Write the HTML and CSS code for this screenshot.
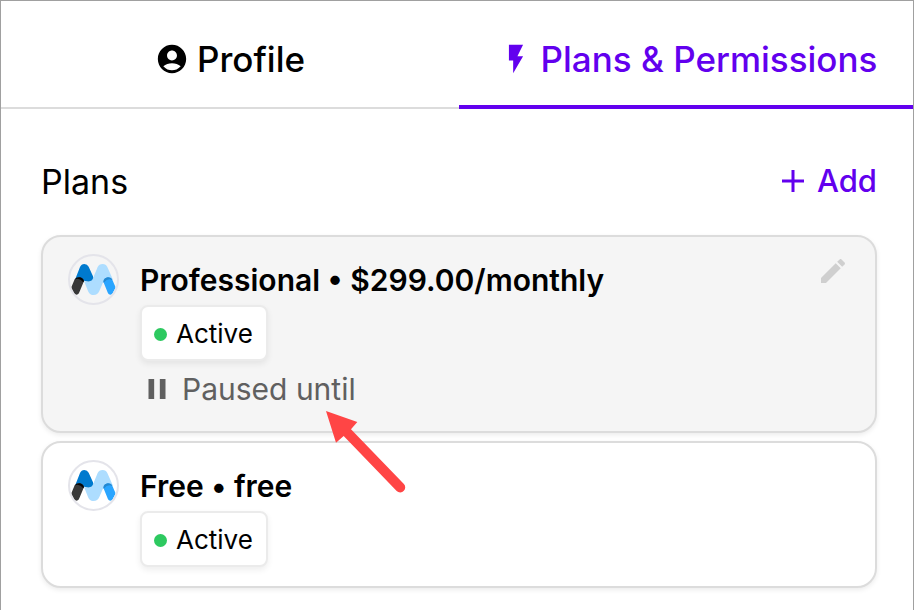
FILE: index.html
```html
<!DOCTYPE html>
<html lang="en">
<head>
<meta charset="utf-8">
<meta name="viewport" content="width=device-width, initial-scale=1">
<title>Plans &amp; Permissions</title>
<link rel="stylesheet" href="styles.css">
</head>
<body>
<svg class="defs" aria-hidden="true">
  <symbol id="logo" viewBox="30 33 141 141">
    <path fill="#ADDDFF" d="M99 100 L113 66 Q117 57 128 57 Q138 57 142 66 L158 102 Q140 96 132 106 L118 138 Q113 150 101 150 Q90 150 85 140 L72 108 Q92 114 99 100Z"/>
    <path fill="#007ACE" d="M45 104 L60 66 Q64 57 73 57 Q82 57 86 65 L99 94 Q102 101 96 106 Q89 112 72 107Z"/>
    <path fill="#383838" d="M34 127 L44 103 Q48 97 58 97 Q68 97 72 108 L58 142 Q56 149 50 149 Q44 149 42 145 L35 131 Q34 129 34 127Z"/>
    <path fill="#050505" d="M44 104 Q48 97 58 97 Q68 97 72 108 L70 112 Q58 96 44 104Z"/>
    <path fill="#2AA5FF" d="M130 110 Q132 98 144 97 Q152 97 156 102 L166 125 Q167 128 165 131 L158 145 Q156 149 151 149 Q146 149 144 145Z"/>
    <path fill="#2588D0" d="M130 110 Q132 98 144 97 Q152 97 156 102 L157 105 Q144 98 131 113Z"/>
  </symbol>
</svg>
<div class="panel">
  <nav class="tabs">
    <a class="tab" href="#profile">
      <svg class="icon" viewBox="0 0 24 24" aria-hidden="true"><path d="M12 2C6.480 2 2 6.480 2 12s4.480 10 10 10 10-4.480 10-10S17.520 2 12 2zm0 4c1.930 0 3.500 1.570 3.500 3.500S13.930 13 12 13s-3.500-1.570-3.500-3.500S10.070 6 12 6zm0 14c-2.030 0-4.430-.820-6.140-2.880C7.550 15.800 9.680 15 12 15s4.450.800 6.140 2.120C16.430 19.180 14.030 20 12 20z"/></svg>
      <span>Profile</span>
    </a>
    <a class="tab active" href="#plans" aria-current="page">
      <svg class="icon" viewBox="0 0 24 24" aria-hidden="true"><path d="M7 2v11h3v9l7-12h-4l4-8z"/></svg>
      <span>Plans &amp; Permissions</span>
    </a>
  </nav>
  <main class="content">
    <header class="heading">
      <h1>Plans</h1>
      <button class="add" type="button">
        <svg class="plus" viewBox="0 0 24 24" aria-hidden="true"><path d="M12 1v22M1 12h22"/></svg>
        <span>Add</span>
      </button>
    </header>
    <section class="card selected">
      <svg class="avatar" aria-hidden="true"><use href="#logo"/></svg>
      <div class="details">
        <h2>Professional • $299.00/monthly</h2>
        <span class="badge"><i class="dot"></i>Active</span>
        <p class="paused">
          <svg class="icon" viewBox="0 0 24 24" aria-hidden="true"><path d="M6 19h4V5H6v14zm8-14v14h4V5h-4z"/></svg>
          <span>Paused until</span>
        </p>
      </div>
      <button class="edit" type="button" aria-label="Edit plan">
        <svg viewBox="0 0 24 24" aria-hidden="true"><path d="M3 17.250V21h3.750L17.810 9.940l-3.750-3.750L3 17.250zM20.710 7.040c.390-.390.390-1.020 0-1.410l-2.340-2.340c-.390-.390-1.020-.390-1.410 0l-1.830 1.830 3.750 3.750 1.830-1.830z"/></svg>
      </button>
      <svg class="arrow" viewBox="78 93 240 246" aria-hidden="true"><path d="M78 93 L172 126 L153 148 L311 311 A15 15 0 0 1 290 333 L131 168 L108 188Z"/></svg>
    </section>
    <section class="card">
      <svg class="avatar" aria-hidden="true"><use href="#logo"/></svg>
      <div class="details">
        <h2>Free • free</h2>
        <span class="badge"><i class="dot"></i>Active</span>
      </div>
    </section>
  </main>
</div>
</body>
</html>
```
FILE: styles.css
```css
* { box-sizing: border-box; }

body {
  margin: 0;
  background: #fff;
  color: #000;
  font-family: Inter, "Liberation Sans", sans-serif;
}

h1, h2, p { margin: 0; }

button {
  padding: 0;
  border: 0;
  background: none;
  font: inherit;
  cursor: pointer;
}

svg { display: block; flex: none; }

.defs { position: absolute; width: 0; height: 0; }

.panel {
  min-height: 100vh;
  border: 1px solid #a0a0a0;
}

.tabs {
  display: grid;
  grid-template-columns: 458fr 454fr;
}

.tab {
  display: flex;
  align-items: center;
  justify-content: center;
  gap: 8px;
  height: 108px;
  padding-top: 10px;
  border-bottom: 2px solid #dcdcdc;
  color: #000;
  font-size: 35px;
  font-weight: 550;
  line-height: 44px;
  text-decoration: none;
  white-space: nowrap;
}

.tab.active {
  padding-top: 12px;
  padding-left: 4px;
  border-bottom: 4px solid #6200ee;
  color: #6200ee;
}

.icon {
  width: 34px;
  height: 34px;
  fill: currentColor;
}

.content { padding: 48px 36px 20px 40px; }

.heading {
  display: flex;
  align-items: center;
  justify-content: space-between;
  height: 48px;
  margin-bottom: 30px;
}

h1 {
  padding-top: 2px;
  font-size: 34px;
  font-weight: 400;
  line-height: 48px;
}

.add {
  display: flex;
  align-items: center;
  gap: 12px;
  color: #6200ee;
  font-size: 31px;
  font-weight: 550;
  line-height: 40px;
}

.plus {
  width: 24px;
  height: 24px;
  fill: none;
  stroke: currentColor;
  stroke-width: 3;
}

.card {
  position: relative;
  display: flex;
  align-items: flex-start;
  gap: 21px;
  margin-bottom: 8px;
  padding: 17px 26px 19px 25px;
  border: 2px solid #dcdcdc;
  border-radius: 20px;
  background: #fff;
  box-shadow: 0 2px 5px rgba(0, 0, 0, 0.08);
}

.card.selected { padding-bottom: 22px; background: #f5f5f5; }

.avatar {
  width: 51px;
  height: 51px;
  border: 2px solid #e4e4ea;
  border-radius: 50%;
}

.details { flex: 1; }

h2 {
  padding-top: 6px;
  font-size: 30px;
  font-weight: 600;
  line-height: 40px;
}

.badge {
  display: flex;
  align-items: center;
  gap: 9px;
  width: fit-content;
  height: 56px;
  margin-top: 5px;
  padding: 2px 13px 0 12px;
  border: 2px solid #ebebeb;
  border-radius: 8px;
  background: #fff;
  box-shadow: 0 3px 6px rgba(0, 0, 0, 0.07);
  font-size: 26px;
  line-height: 32px;
}

.dot {
  width: 13px;
  height: 13px;
  border-radius: 50%;
  background: #2dc960;
}

.paused {
  display: flex;
  align-items: center;
  gap: 8px;
  margin-top: 8px;
  color: #606060;
  font-size: 30px;
  line-height: 40px;
}

.edit { padding-top: 1px; }

.edit svg {
  width: 32px;
  height: 32px;
  fill: #cfcfcf;
}

.arrow {
  position: absolute;
  top: 174px;
  left: 283px;
  z-index: 1;
  width: 80px;
  height: 82px;
  fill: #ff4545;
}
```
